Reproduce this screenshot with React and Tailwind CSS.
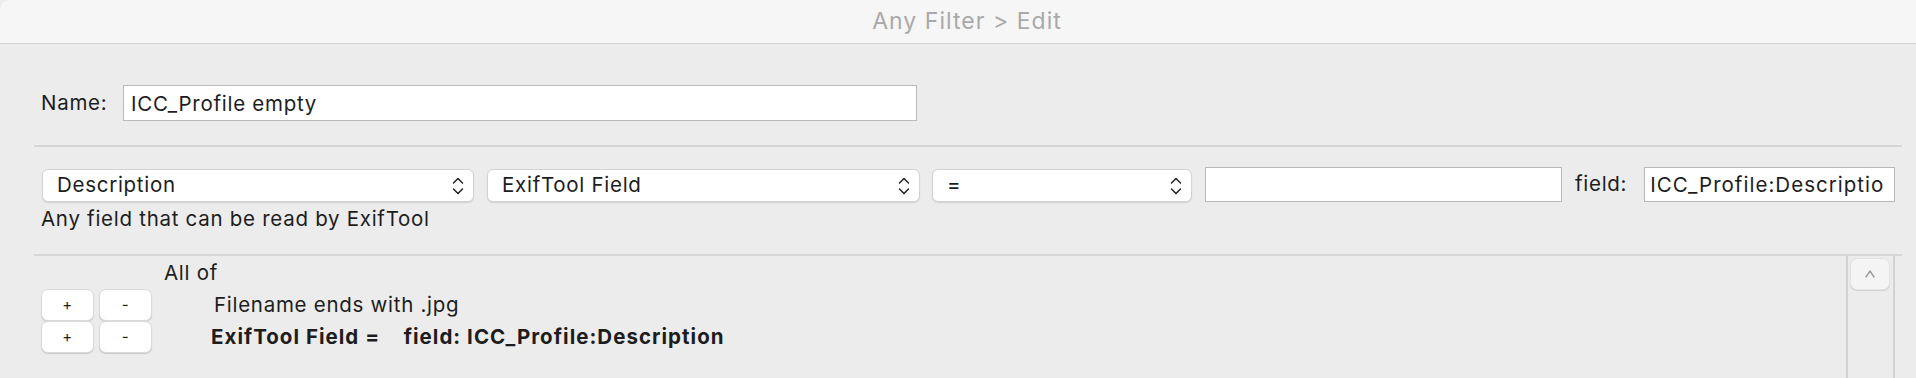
import { useState } from "react";

function UpDown() {
  return (
    <svg width="12" height="18" viewBox="0 0 12 18" fill="none" className="shrink-0">
      <path d="M1.5 6 L6 1.5 L10.5 6" stroke="#2a2a2a" strokeWidth="1.6" strokeLinecap="round" strokeLinejoin="round" />
      <path d="M1.5 12 L6 16.5 L10.5 12" stroke="#2a2a2a" strokeWidth="1.6" strokeLinecap="round" strokeLinejoin="round" />
    </svg>
  );
}

function PopUp({ label, width }) {
  return (
    <div
      className={`${width} h-[33px] mt-[2px] flex items-center justify-between pl-[14px] pr-[9px] bg-white rounded-[6px] border border-[#d3d3d3] shadow-[0_1px_1px_rgba(0,0,0,0.12)]`}
    >
      <span>{label}</span>
      <UpDown />
    </div>
  );
}

function SmallButton({ children }) {
  return (
    <button className="w-[53px] h-[32px] flex items-center justify-center bg-white rounded-[7px] border border-[#dadada] shadow-[0_1px_1px_rgba(0,0,0,0.15)] text-[15px] text-[#222]">
      {children}
    </button>
  );
}

export default function App() {
  const [name, setName] = useState("ICC_Profile empty");
  const [field, setField] = useState("ICC_Profile:Descriptio");
  const [value, setValue] = useState("");

  return (
    <div className="w-[1916px] h-[378px] overflow-hidden bg-[#ececec] text-[20.5px] text-[#1d1d1d] font-['Inter',sans-serif] tracking-[0.035em]">
      <div className="h-[44px] bg-[#f6f6f6] border-b border-[#d2d2d2] rounded-tl-[10px] flex items-center justify-center pl-[18px]">
        <span className="text-[#a9a9a9] text-[23px] tracking-[0.045em]">Any Filter &gt; Edit</span>
      </div>

      <div className="pl-[34px] pr-[14px]">
        <div className="mt-[41px] pl-[7px] flex items-center">
          <span className="w-[82px]">Name:</span>
          <input
            className="w-[794px] h-[36px] px-[7px] bg-white border border-[#b9b9b9] outline-none tracking-[0.035em]"
            value={name}
            onChange={(e) => setName(e.target.value)}
          />
        </div>

        <div className="mt-[24px] h-[2px] bg-[#d6d6d6]" />

        <div className="mt-[20px] pl-[8px] flex items-start">
          <PopUp label="Description" width="w-[432px]" />
          <div className="ml-[13px]">
            <PopUp label="ExifTool Field" width="w-[433px]" />
          </div>
          <div className="ml-[12px]">
            <PopUp label="=" width="w-[260px]" />
          </div>
          <input
            className="ml-[13px] w-[357px] h-[35px] px-[7px] bg-white border border-[#b9b9b9] outline-none"
            value={value}
            onChange={(e) => setValue(e.target.value)}
          />
          <span className="ml-[13px] h-[35px] flex items-center">field:</span>
          <input
            className="ml-[17px] w-[251px] h-[35px] px-[5px] bg-white border border-[#b9b9b9] outline-none tracking-[0.05em]"
            value={field}
            onChange={(e) => setField(e.target.value)}
          />
        </div>

        <div className="pl-[7px] mt-[5px] leading-[24px]">Any field that can be read by ExifTool</div>

        <div className="mt-[23px] h-[2px] bg-[#d6d6d6]" />

        <div className="flex">
          <div className="flex-1 pt-[1px]">
            <div className="h-[32px] flex items-center pl-[130px]">All of</div>
            <div className="h-[32px] flex items-center">
              <div className="pl-[7px] flex gap-[5px] w-[180px]">
                <SmallButton>+</SmallButton>
                <SmallButton>-</SmallButton>
              </div>
              <span>Filename ends with .jpg</span>
            </div>
            <div className="h-[32px] flex items-center">
              <div className="pl-[7px] flex gap-[5px] w-[177px]">
                <SmallButton>+</SmallButton>
                <SmallButton>-</SmallButton>
              </div>
              <span className="font-bold tracking-[0.05em] whitespace-pre">ExifTool Field =    field: ICC_Profile:Description</span>
            </div>
          </div>
          <div className="w-[49px] h-[130px] mr-[7px] border-l-2 border-r-2 border-[#d3d3d3] pt-[2px] pl-[2px]">
            <div className="w-[40px] h-[32px] rounded-[7px] bg-[#f4f4f4] shadow-[0_1px_1px_rgba(0,0,0,0.12)] border border-[#e2e2e2] flex items-center justify-center">
              <svg width="10" height="8" viewBox="0 0 10 8" fill="none">
                <path d="M1 7 L5 1 L9 7" stroke="#9c9c9c" strokeWidth="1.4" strokeLinecap="round" strokeLinejoin="round" />
              </svg>
            </div>
          </div>
        </div>
      </div>
    </div>
  );
}
